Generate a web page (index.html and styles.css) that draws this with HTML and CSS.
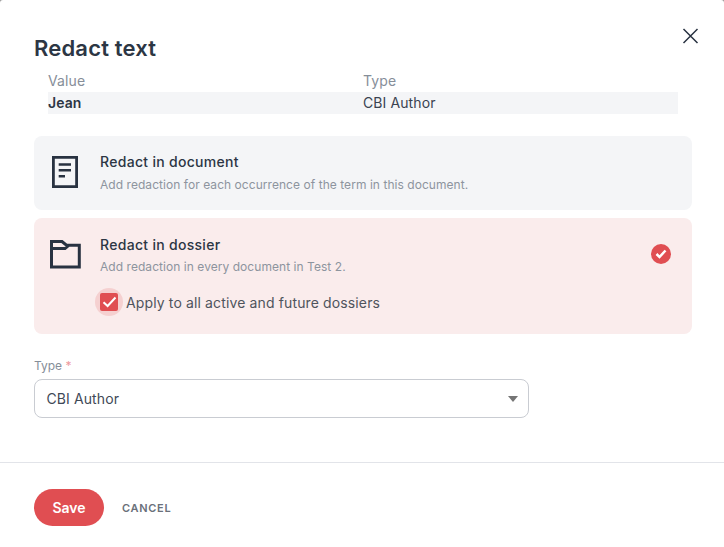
FILE: index.html
```html
<!DOCTYPE html>
<html lang="en">
<head>
<meta charset="utf-8">
<title>Redact text</title>
<link rel="stylesheet" href="styles.css">
</head>
<body>
<div class="dialog">
  <button class="close" aria-label="Close">
    <svg width="16" height="16" viewBox="0 0 16 16"><path d="M1 1L15 15M15 1L1 15" fill="none" stroke="#283241" stroke-width="1.5"/></svg>
  </button>
  <div class="body">
    <h1 class="title">Redact text</h1>
    <div class="table">
      <div class="row head"><span class="col-value">Value</span><span>Type</span></div>
      <div class="row data"><span class="col-value strong">Jean</span><span>CBI Author</span></div>
    </div>
    <div class="option">
      <svg class="opt-icon doc" width="26" height="32" viewBox="0 0 26 32"><path d="M1.4 1.4H24.6V30.6H1.4Z" fill="none" stroke="#283241" stroke-width="2.8"/><path d="M6.7 7.3H19V9.8H6.7ZM6.7 13H19V15.5H6.7ZM6.7 19H13V21.5H6.7Z" fill="#283241"/></svg>
      <div class="opt-text">
        <div class="opt-title">Redact in document</div>
        <div class="opt-desc">Add redaction for each occurrence of the term in this document.</div>
      </div>
    </div>
    <div class="option active">
      <svg class="opt-icon folder" width="31" height="29" viewBox="0 0 31 29"><path d="M1.5 27V1.5H12L16.5 5.2H29.3V27Z M1.5 8.6H15L19 5.2" fill="none" stroke="#283241" stroke-width="3"/></svg>
      <div class="opt-text">
        <div class="opt-title">Redact in dossier</div>
        <div class="opt-desc">Add redaction in every document in Test 2.</div>
        <label class="check">
          <span class="box"><svg width="15" height="12" viewBox="0 0 15 12"><path d="M1.5 6.2L5.6 10L13.5 1.5" fill="none" stroke="#fff" stroke-width="2"/></svg></span>
          <span>Apply to all active and future dossiers</span>
        </label>
      </div>
      <span class="selected"><svg width="12" height="10" viewBox="0 0 12 10"><path d="M1.5 5L4.5 8L10.5 1.5" fill="none" stroke="#fff" stroke-width="2.5"/></svg></span>
    </div>
    <div class="field">
      <div class="field-label">Type <span class="req">*</span></div>
      <div class="select"><span>CBI Author</span><span class="arrow"></span></div>
    </div>
  </div>
  <div class="footer">
    <button class="save">Save</button>
    <button class="cancel">CANCEL</button>
  </div>
</div>
</body>
</html>
```

FILE: styles.css
```css
* { box-sizing: border-box; }
html, body { margin: 0; padding: 0; background: #9a9a9a; }
body { font-family: Inter, "Liberation Sans", sans-serif; color: #283241; width: 724px; height: 547px; overflow: hidden; }
.dialog { position: relative; height: 547px; display: flex; flex-direction: column; background: #fff; border-radius: 3px 3px 0 0; }
.close { position: absolute; top: 28px; right: 26px; width: 16px; height: 16px; padding: 0; border: 0; background: none; display: flex; transform: translateX(.5px); }
.body { padding: 34px 32px 0 34px; height: 462px; }
.title { margin: 0; font-size: 22px; line-height: 28px; font-weight: 600; letter-spacing: .18px; color: #2c3644; }
.table { margin: 8px 14px 0; font-size: 14px; letter-spacing: .1px; }
.row { display: flex; height: 22px; align-items: center; padding-bottom: 1px; }
.head { color: #868e99; height: 22px; }
.data { background: #f4f5f7; color: #3a4351; }
.data .strong { color: #2c3644; }
.col-value { width: 315px; }
.strong { font-weight: 600; }
.option { display: flex; margin-top: 8px; padding: 18px 16px; background: #f4f5f7; border-radius: 8px; height: 74px; position: relative; }
.table + .option { margin-top: 22px; }
.option.active { background: #faecec; height: 116px; padding-top: 19px; }
.opt-icon { flex: none; }
.opt-icon.doc { margin: 2px 0 0 2px; }
.opt-icon.folder { margin: 3px 0 0 0; }
.opt-text { margin-left: 22px; }
.active .opt-text { margin-left: 19px; }
.opt-title { font-size: 14px; line-height: 16px; font-weight: 500; letter-spacing: .3px; color: #2c3644; }
.opt-desc { font-size: 12px; line-height: 14px; margin-top: 8px; letter-spacing: .05px; color: #8d949e; }
.active .opt-desc { margin-top: 7px; }
.check { display: flex; align-items: center; margin-top: 19px; font-size: 14px; letter-spacing: .13px; color: #4f545c; gap: 8px; }
.box { position: relative; width: 18px; height: 18px; border-radius: 2px; background: #e04e52; display: flex; align-items: center; justify-content: center; }
.box::before { content: ""; position: absolute; left: -5px; top: -5px; width: 28px; height: 28px; border-radius: 50%; background: #f5d0d0; z-index: 0; }
.box::after { content: ""; position: absolute; inset: 0; border-radius: 2px; background: #e04e52; z-index: 1; }
.box svg { position: relative; z-index: 2; }
.selected { position: absolute; right: 21px; top: 26px; width: 20px; height: 20px; border-radius: 50%; background: #e04e52; display: flex; align-items: center; justify-content: center; }
.field { margin-top: 25px; width: 495px; }
.field-label { font-size: 12px; line-height: 14px; color: #868e99; }
.req { color: #ee9a9c; }
.select { margin-top: 6px; height: 39px; border: 1px solid #c9ccd2; border-radius: 8px; display: flex; align-items: center; justify-content: space-between; padding: 0 10.5px 0 11.5px; font-size: 14px; letter-spacing: .1px; color: #3f4957; background: #fff; }
.arrow { width: 0; height: 0; border-left: 5.5px solid transparent; border-right: 5.5px solid transparent; border-top: 6px solid #757575; }
.footer { border-top: 1px solid #e2e4e9; flex: 1; display: flex; align-items: flex-start; padding: 26px 34px 0; gap: 18px; }
.save { width: 70px; height: 37px; border: 0; border-radius: 19px; background: #e04e52; color: #fff; font: 600 14px Inter, sans-serif; padding: 0; }
.cancel { border: 0; background: none; padding: 0; height: 37px; font: 600 11px Inter, sans-serif; letter-spacing: .7px; color: #6a707a; }
```
